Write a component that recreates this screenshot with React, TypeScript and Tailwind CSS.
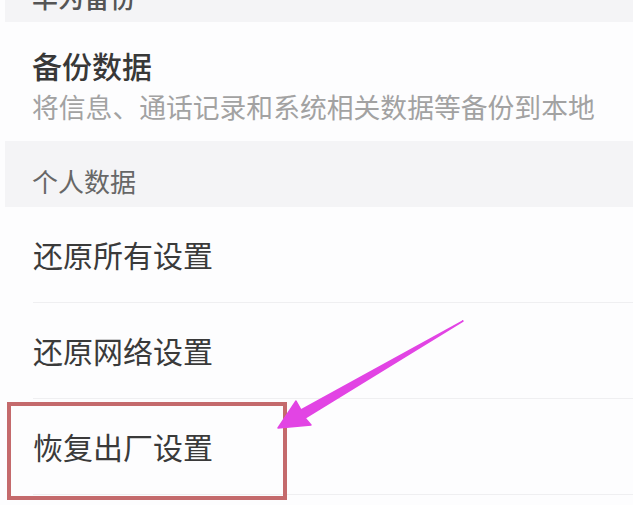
const font = { fontFamily: '"Noto Sans CJK SC", "Noto Sans", sans-serif' };

const rows = ["还原所有设置", "还原网络设置", "恢复出厂设置"];

function Arrow() {
  return (
    <svg className="pointer-events-none absolute left-0 top-0" width="633" height="505" viewBox="0 0 633 505">
      <polygon
        points="463,321 305,418 311,425 278,428 296,401 301,410"
        fill="#e244e4"
        stroke="#e244e4"
        strokeWidth="1.5"
        strokeLinejoin="round"
      />
    </svg>
  );
}

export default function App() {
  return (
    <div className="relative h-[505px] w-full overflow-hidden bg-[#fdfdfe]" style={font}>
      {/* cut-off header */}
      <div className="ml-[5px] h-[22px] overflow-hidden bg-[#f4f4f6]">
        <div className="-mt-[16px] pl-[27px] text-[26px] leading-[26px] font-medium text-[#555]">华为备份</div>
      </div>

      <div className="flex h-[119px] flex-col pl-[32px] pt-[28px]">
        <span className="text-[30px] leading-[30px] font-medium text-[#383838]">备份数据</span>
        <span className="mt-[13px] whitespace-nowrap text-[26.8px] leading-[27px] text-[#a2a2a2]">
          将信息、通话记录和系统相关数据等备份到本地
        </span>
      </div>

      <div className="ml-[5px] flex h-[66px] items-center bg-[#f4f4f6] pt-[14px]">
        <span className="pl-[27px] text-[26px] leading-[26px] text-[#676767]">个人数据</span>
      </div>

      <div className="flex flex-col pl-[33px]">
        {rows.map((r) => (
          <div key={r} className="flex h-[96px] items-center border-b border-[#efeff1] pb-[2px]">
            <span className="text-[30px] leading-[30px] text-[#3a3a3a]">{r}</span>
          </div>
        ))}
      </div>

      {/* annotation */}
      <div className="pointer-events-none absolute left-[7px] top-[402px] h-[98px] w-[280px] border-[4px] border-[#c46a6c]" />
      <Arrow />
    </div>
  );
}
